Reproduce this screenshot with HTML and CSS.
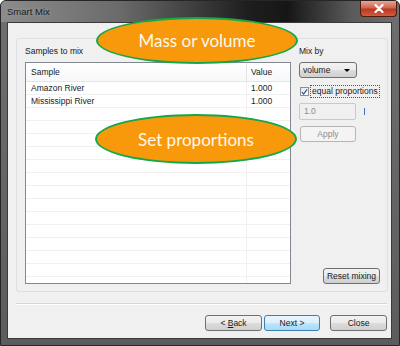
FILE: index.html
```html
<!DOCTYPE html>
<html lang="en">
<head>
    <meta charset="UTF-8">
    <title>Smart Mix</title>
    <link rel="stylesheet" href="styles.css">
</head>
<body>
    <div class="window">
        <div class="titlebar">
            <span class="title">Smart Mix</span>
            <div class="close-x">
                <svg width="10" height="9" viewBox="0 0 10 9"><path d="M1.5 1 L8.5 8 M8.5 1 L1.5 8" stroke="#fff" stroke-width="2.2" stroke-linecap="round"/></svg>
            </div>
        </div>
        <div class="frame">
            <div class="client">
                <div class="group">
                    <div class="samples">
                        <div class="caption">Samples to mix</div>
                        <div class="list">
                            <div class="list-head">
                                <div class="col-name">Sample</div>
                                <div class="col-value">Value</div>
                            </div>
                            <div class="list-body">
                                <div class="row">
                                    <div class="col-name">Amazon River</div>
                                    <div class="col-value">1.000</div>
                                </div>
                                <div class="row">
                                    <div class="col-name">Mississippi River</div>
                                    <div class="col-value">1.000</div>
                                </div>
                            </div>
                        </div>
                    </div>
                    <div class="mixpanel">
                        <div class="caption">Mix by</div>
                        <div class="dropdown">
                            <span>volume</span>
                            <span class="arrow"></span>
                        </div>
                        <div class="check-row">
                            <span class="checkbox">
                                <svg width="8" height="8" viewBox="0 0 8 8"><path d="M1 4.2 L3 6.5 L7 1" fill="none" stroke="#2a4fa8" stroke-width="1.3"/></svg>
                            </span>
                            <span class="check-label">equal proportions</span>
                        </div>
                        <div class="value-row">
                            <div class="textbox">1.0</div>
                            <span class="caret"></span>
                        </div>
                        <button class="btn disabled apply">Apply</button>
                        <button class="btn reset">Reset mixing</button>
                    </div>
                </div>
                <div class="separator"></div>
                <div class="actions">
                    <button class="btn">&lt; <u>B</u>ack</button>
                    <button class="btn default">Next &gt;</button>
                    <button class="btn close">Close</button>
                </div>
            </div>
        </div>
        <div class="callout callout-mass">Mass or volume</div>
        <div class="callout callout-prop">Set proportions</div>
    </div>
</body>
</html>
```

FILE: styles.css
```css
body {
    margin: 0;
    background-color: #ffffff;
    font-family: 'Liberation Sans', Arial, sans-serif;
}
.window {
    position: relative;
    width: 400px;
    height: 346px;
    box-sizing: border-box;
    display: flex;
    flex-direction: column;
    background-color: #4a4a4a;
    border: 1px solid #262626;
    border-radius: 6px 6px 0 0;
    overflow: hidden;
}
.titlebar {
    height: 21px;
    display: flex;
    align-items: flex-start;
    justify-content: space-between;
    padding-left: 6px;
    padding-right: 2px;
    background: linear-gradient(90deg, #8c8c8c 0%, #6a6a6a 30%, #1e1e1e 62%, #161616 72%, #5a5a5a 88%, #707070 100%);
}
.title {
    font-size: 9.5px;
    color: #1a1a1a;
    line-height: 21px;
    text-shadow: 0 0 4px rgba(255, 255, 255, 0.35);
}
.close-x {
    width: 37px;
    height: 16px;
    display: flex;
    align-items: center;
    justify-content: center;
    background: linear-gradient(180deg, #e8a595 0%, #d2664f 45%, #b63a22 55%, #d55a3e 100%);
    border: 1px solid #521b10;
    border-top: none;
    border-radius: 0 0 4px 4px;
    box-sizing: border-box;
}
.frame {
    flex: 1;
    display: flex;
    padding: 0 7px 6px 6px;
    background: linear-gradient(180deg, #6e6e6e 0%, #5c5c5c 100%);
}
.client {
    flex: 1;
    display: flex;
    flex-direction: column;
    background-color: #f0f0f0;
    border: 1px solid #3a3a3a;
    padding: 15px 3px 7px 8px;
}
.group {
    height: 254px;
    box-sizing: border-box;
    display: flex;
    gap: 8px;
    padding: 6px 5px 7px 8px;
    border: 1px solid #dcdfe3;
    border-radius: 3px;
    font-size: 8.5px;
    color: #1a1a1a;
}
.caption {
    height: 12px;
    line-height: 12px;
    margin-bottom: 5px;
}
.samples {
    width: 266px;
    display: flex;
    flex-direction: column;
}
.list {
    flex: 1;
    display: flex;
    flex-direction: column;
    background-color: #ffffff;
    border: 1px solid #828790;
}
.list-head {
    height: 18px;
    display: flex;
    align-items: center;
    background: linear-gradient(180deg, #ffffff 0%, #f7f8fa 100%);
    border-bottom: 1px solid #e5e5e5;
}
.list-head .col-value {
    border-left: 1px solid #e5e5e5;
    height: 18px;
    line-height: 18px;
}
.col-name {
    flex: 1;
    padding-left: 5px;
}
.col-value {
    width: 39px;
    padding-left: 4px;
}
.list-body {
    flex: 1;
    background:
        linear-gradient(90deg, transparent 220px, #f0f0f0 220px, #f0f0f0 221px, transparent 221px),
        repeating-linear-gradient(180deg, transparent 0, transparent 12px, #f0f0f0 12px, #f0f0f0 13px);
}
.row {
    height: 13px;
    line-height: 12px;
    display: flex;
}
.mixpanel {
    flex: 1;
    display: flex;
    flex-direction: column;
    align-items: flex-start;
}
.dropdown {
    width: 58px;
    height: 16px;
    box-sizing: border-box;
    display: flex;
    align-items: center;
    justify-content: space-between;
    padding: 0 6px 0 3px;
    border: 1px solid #707070;
    border-radius: 3px;
    background: linear-gradient(180deg, #f2f2f2 0%, #ebebeb 50%, #dddddd 51%, #cfcfcf 100%);
}
.arrow {
    width: 0;
    height: 0;
    border-left: 3px solid transparent;
    border-right: 3px solid transparent;
    border-top: 3px solid #000000;
}
.check-row {
    margin-top: 7px;
    display: flex;
    align-items: center;
    gap: 1px;
}
.checkbox {
    width: 9px;
    height: 9px;
    box-sizing: border-box;
    display: flex;
    align-items: center;
    justify-content: center;
    border: 1px solid #8e8f8f;
    background: linear-gradient(135deg, #e4e4e4 0%, #ffffff 100%);
    margin-left: 1px;
}
.check-label {
    padding: 0 1px;
    line-height: 11px;
    border: 1px dotted #555555;
}
.value-row {
    margin-top: 5px;
    display: flex;
    align-items: center;
    gap: 8px;
}
.textbox {
    width: 57px;
    height: 17px;
    box-sizing: border-box;
    line-height: 15px;
    padding-left: 4px;
    border: 1px solid #c9c9c9;
    border-radius: 2px;
    background-color: #f0f0f0;
    color: #8a8a8a;
}
.caret {
    width: 1px;
    height: 7px;
    background-color: #4a6fc7;
}
.btn {
    height: 16px;
    box-sizing: border-box;
    padding: 0;
    font-family: 'Liberation Sans', Arial, sans-serif;
    font-size: 8.5px;
    color: #1a1a1a;
    border: 1px solid #707070;
    border-radius: 3px;
    background: linear-gradient(180deg, #f2f2f2 0%, #ebebeb 50%, #dddddd 51%, #cfcfcf 100%);
}
.btn.disabled {
    color: #8d8d8d;
    border-color: #b5b5b5;
    background: #f4f4f4;
}
.apply {
    width: 56px;
    margin-top: 6px;
    margin-left: 1px;
}
.reset {
    width: 57px;
    margin-top: auto;
    margin-left: 24px;
}
.separator {
    margin-top: 11px;
    margin-right: 1px;
    height: 1px;
    background-color: #d5d5d5;
    border-bottom: 1px solid #ffffff;
}
.actions {
    margin-top: 10px;
    display: flex;
    justify-content: flex-end;
    padding-right: 1px;
}
.actions .btn {
    width: 57px;
}
.actions .default {
    width: 56px;
    margin-left: 2px;
    border-color: #3c7fb1;
    background: linear-gradient(180deg, #eaf6fd 0%, #d9f0fc 50%, #bee6fd 51%, #a7d9f5 100%);
}
.actions .close {
    margin-left: 10px;
}
.callout {
    position: absolute;
    box-sizing: border-box;
    display: flex;
    align-items: center;
    justify-content: center;
    border: 2.5px solid #14a84a;
    border-radius: 50%;
    background-color: #f7990b;
    color: #fff8ee;
    font-family: Lato, 'Open Sans', sans-serif;
    font-size: 17px;
}
.callout-mass {
    left: 95px;
    top: 16px;
    width: 202px;
    height: 47px;
}
.callout-prop {
    left: 94px;
    top: 113px;
    width: 202px;
    height: 50px;
}
```
